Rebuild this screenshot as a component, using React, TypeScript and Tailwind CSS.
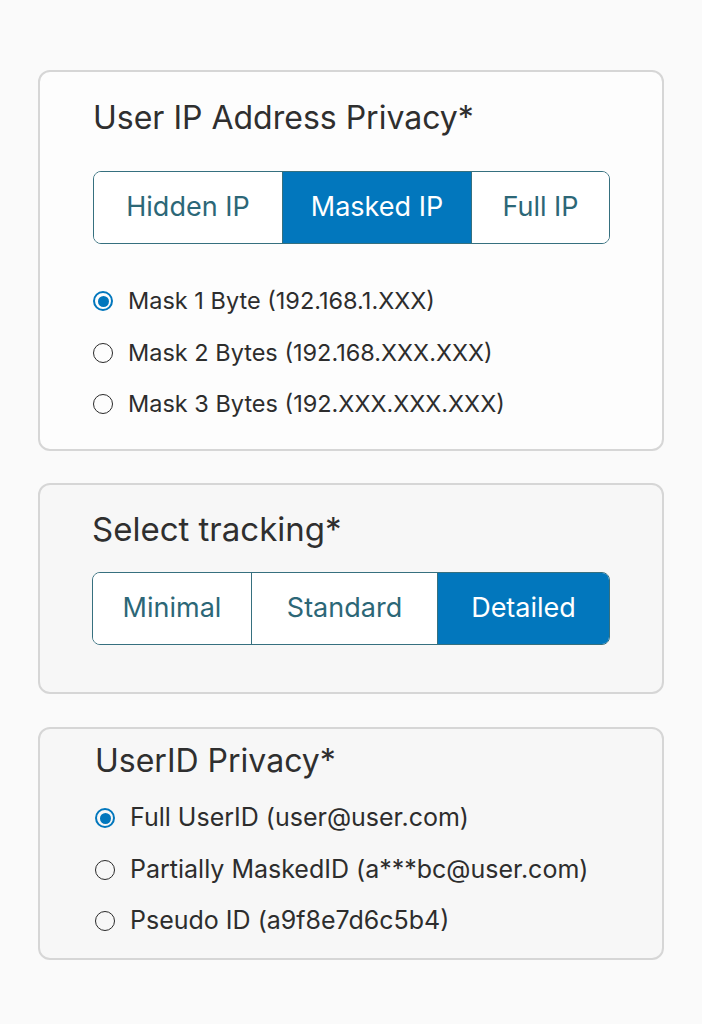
import { useState } from 'react';

type Option = { label: string; width: number };

const ipModes: Option[] = [
  { label: 'Hidden IP', width: 188 },
  { label: 'Masked IP', width: 189 },
  { label: 'Full IP', width: 138 },
];

const trackingModes: Option[] = [
  { label: 'Minimal', width: 158 },
  { label: 'Standard', width: 186 },
  { label: 'Detailed', width: 172 },
];

const maskOptions = [
  'Mask 1 Byte (192.168.1.XXX)',
  'Mask 2 Bytes (192.168.XXX.XXX)',
  'Mask 3 Bytes (192.XXX.XXX.XXX)',
];

const userIdOptions = [
  'Full UserID (user@user.com)',
  'Partially MaskedID (a***bc@user.com)',
  'Pseudo ID (a9f8e7d6c5b4)',
];

function Segmented({
  options,
  value,
  onChange,
}: {
  options: Option[];
  value: number;
  onChange: (i: number) => void;
}) {
  return (
    <div className="flex h-[73px] w-fit rounded-[8px] border-[1.5px] border-[#36707f] overflow-hidden">
      {options.map((opt, i) => (
        <button
          key={opt.label}
          onClick={() => onChange(i)}
          style={{ width: opt.width }}
          className={
            'flex items-center justify-center text-[27px] ' +
            (i > 0 ? 'border-l-[1.5px] border-[#36707f] ' : '') +
            (i === value ? 'bg-[#0277bd] text-white' : 'bg-white text-[#2c6777]')
          }
        >
          {opt.label}
        </button>
      ))}
    </div>
  );
}

function RadioList({
  options,
  value,
  onChange,
  textSize,
}: {
  options: string[];
  value: number;
  onChange: (i: number) => void;
  textSize: string;
}) {
  return (
    <ul className="flex flex-col gap-[15.5px]">
      {options.map((label, i) => (
        <li
          key={label}
          onClick={() => onChange(i)}
          className="flex h-[36px] items-center gap-[15px] cursor-pointer"
        >
          {i === value ? (
            <span className="flex h-[20px] w-[20px] items-center justify-center rounded-full border-2 border-[#0277bd]">
              <span className="h-[11px] w-[11px] rounded-full bg-[#0277bd]" />
            </span>
          ) : (
            <span className="h-[20px] w-[20px] rounded-full border-[1.5px] border-[#2a2a2a]" />
          )}
          <span className={textSize + ' text-[#2d2d2d]'}>{label}</span>
        </li>
      ))}
    </ul>
  );
}

export default function App() {
  const [ipMode, setIpMode] = useState(1);
  const [mask, setMask] = useState(0);
  const [tracking, setTracking] = useState(2);
  const [userId, setUserId] = useState(0);

  return (
    <div
      className="min-h-[1024px] bg-[#fafafa] px-[38px] pt-[70px] flex flex-col"
      style={{ fontFamily: 'Inter, "Noto Sans", sans-serif' }}
    >
      <section className="rounded-[12px] border-2 border-[#d6d6d6] bg-[#fdfdfd] pl-[53px] pt-[28px] pb-[27px]">
        <h2 className="h-[36px] leading-[36px] text-[32px] text-[#2f2f2f]">
          User IP Address Privacy*
        </h2>
        <div className="mt-[35px]">
          <Segmented options={ipModes} value={ipMode} onChange={setIpMode} />
        </div>
        <div className="mt-[39px]">
          <RadioList options={maskOptions} value={mask} onChange={setMask} textSize="text-[23.5px]" />
        </div>
      </section>

      <section className="mt-[32px] rounded-[12px] border-2 border-[#d6d6d6] bg-[#f7f7f7] pl-[52px] pt-[26px] pb-[47px]">
        <h2 className="h-[36px] leading-[36px] text-[33px] text-[#2f2f2f]">
          Select tracking*
        </h2>
        <div className="mt-[25px]">
          <Segmented options={trackingModes} value={tracking} onChange={setTracking} />
        </div>
      </section>

      <section className="mt-[33px] rounded-[12px] border-2 border-[#d6d6d6] bg-[#f7f7f7] pl-[55px] pt-[14px] pb-[19px]">
        <h2 className="h-[36px] leading-[36px] text-[32px] text-[#2f2f2f]">
          UserID Privacy*
        </h2>
        <div className="mt-[21px]">
          <RadioList options={userIdOptions} value={userId} onChange={setUserId} textSize="text-[25px]" />
        </div>
      </section>
    </div>
  );
}
